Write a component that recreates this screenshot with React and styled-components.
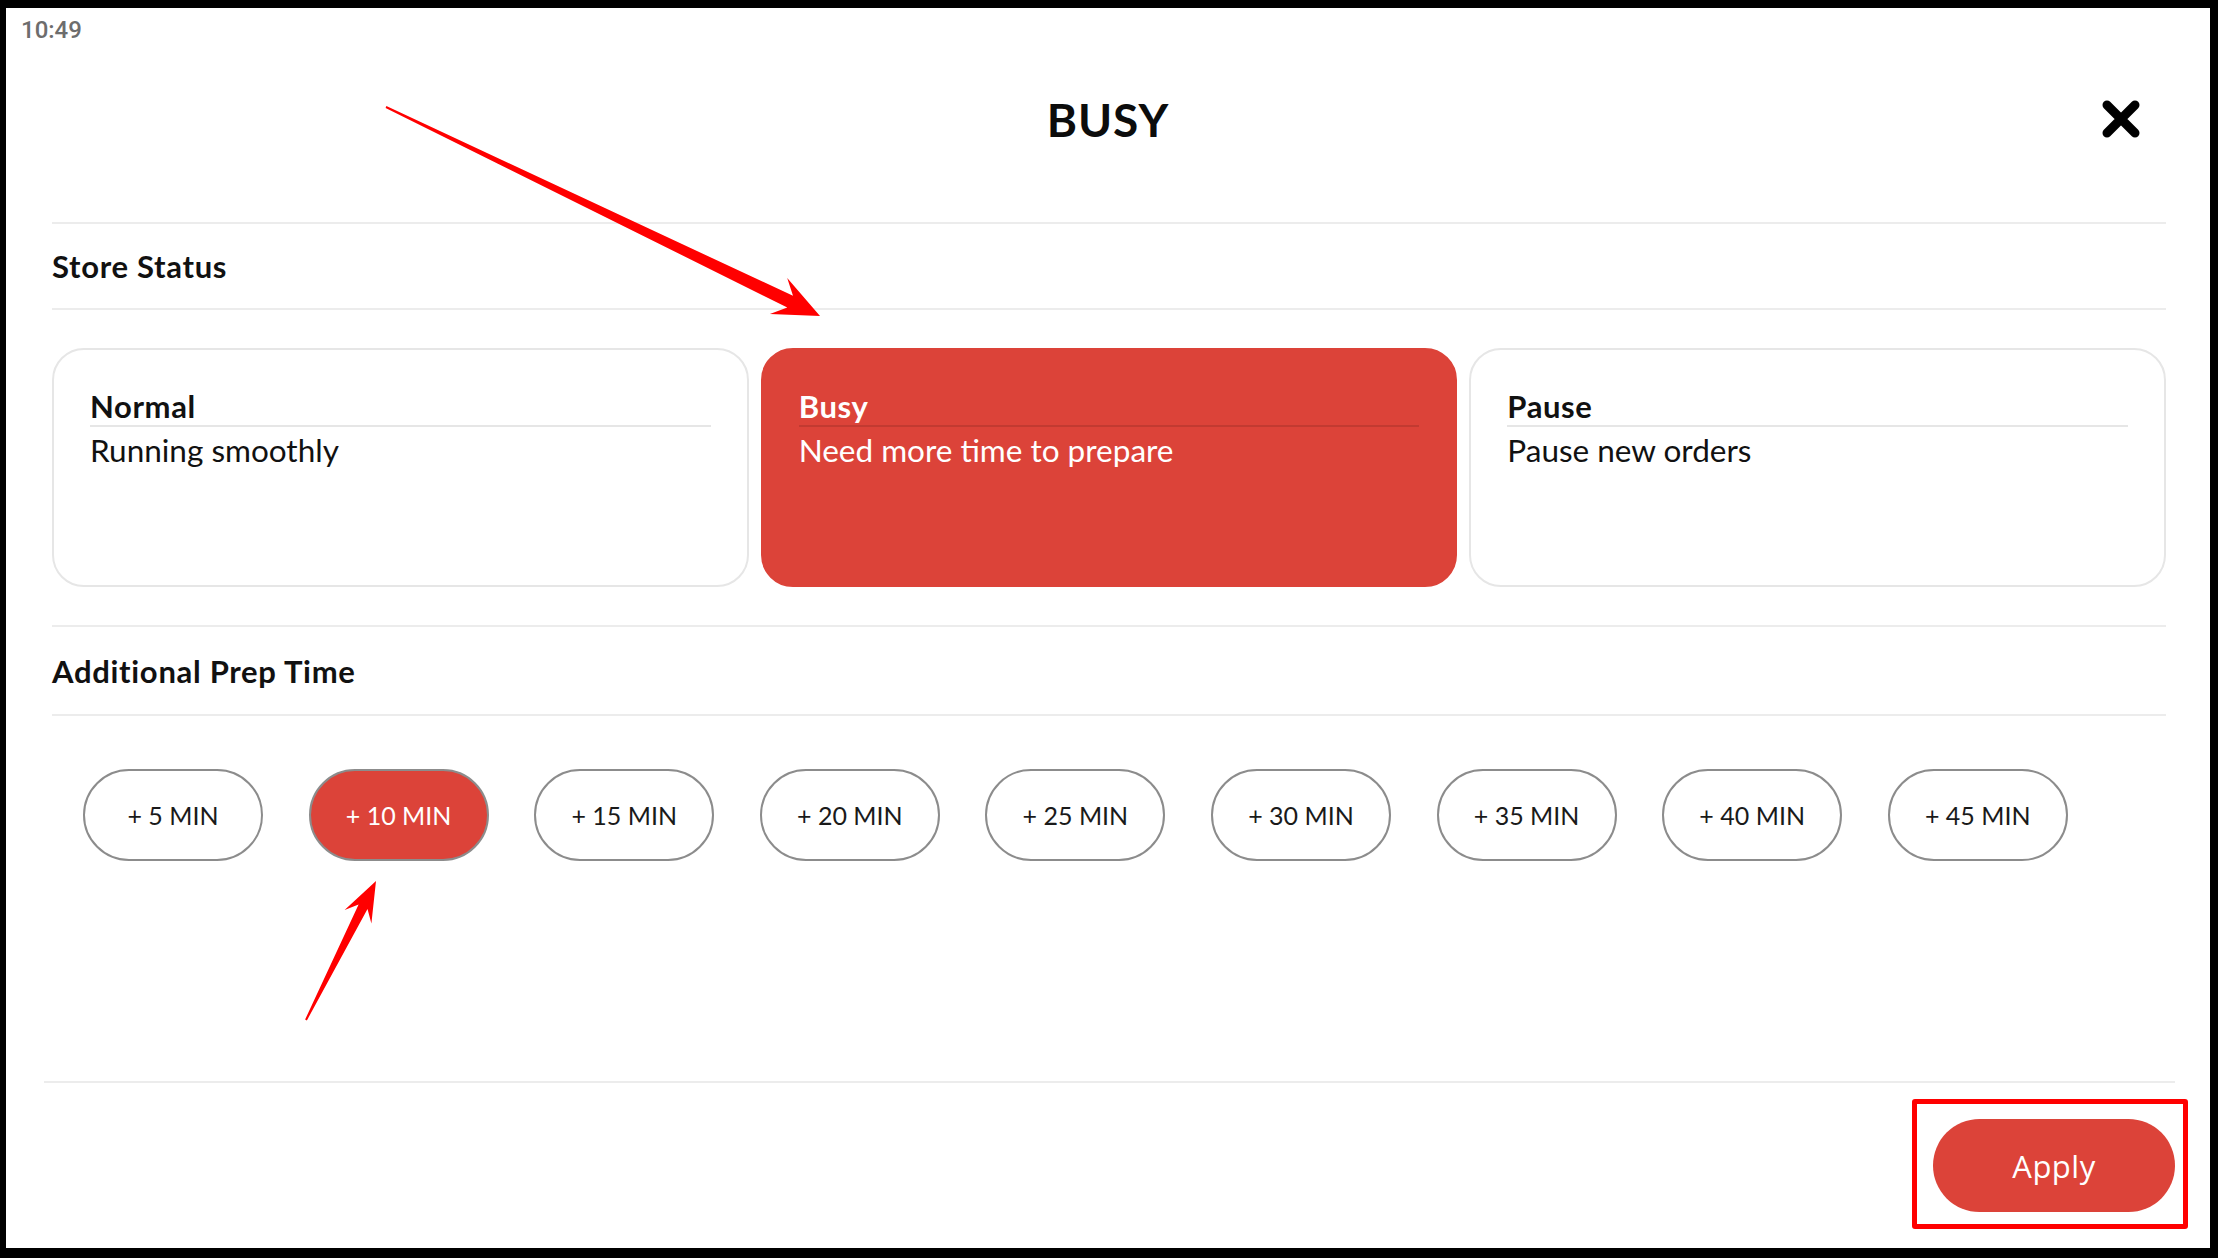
import React from 'react';
import styled, { createGlobalStyle } from 'styled-components';

const GlobalStyle = createGlobalStyle`
  html, body { margin: 0; padding: 0; background: #000; }
  body { width: 2218px; height: 1258px; overflow: hidden; }
  #root { width: 100%; height: 100%; }
  * { box-sizing: border-box; }
`;

const RED = '#dc4339';

const Screen = styled.div`
  width: 2218px;
  height: 1258px;
  padding: 8px 8px 10px 6px;
  background: #000;
`;

const Frame = styled.div`
  position: relative;
  height: 100%;
  background: #fff;
  display: flex;
  flex-direction: column;
  font-family: Lato, 'Open Sans', sans-serif;
  color: #111;
`;

const StatusBar = styled.div`
  height: 44px;
  padding-left: 15px;
  display: flex;
  align-items: center;
`;

const Clock = styled.span`
  font-family: Roboto, sans-serif;
  font-size: 24px;
  font-weight: 500;
  color: #6d6d6d;
`;

const Header = styled.div`
  height: 170px;
  padding-top: 40px;
  display: grid;
  grid-template-columns: 1fr auto 1fr;
  align-items: start;
`;

const Title = styled.h1`
  grid-column: 2;
  margin: 0;
  font-size: 46px;
  line-height: 56px;
  font-weight: 700;
  letter-spacing: 1px;
  color: #0c0c0c;
`;

const CloseButton = styled.button`
  grid-column: 3;
  justify-self: end;
  margin-right: 70px;
  height: 56px;
  padding: 0;
  border: none;
  background: none;
  display: flex;
  align-items: center;
  margin-top: -1px;
`;

const Content = styled.div`
  padding: 0 44px 0 46px;
  display: flex;
  flex-direction: column;
`;

const Divider = styled.div`
  height: 2px;
  background: #ececec;
`;

const SectionTitle = styled.div`
  height: ${p => p.$h || 84}px;
  display: flex;
  align-items: center;
  font-size: 31px;
  letter-spacing: 0.7px;
  font-weight: 700;
  color: #111;
`;

const Cards = styled.div`
  margin: 38px 0;
  height: 239px;
  display: grid;
  grid-template-columns: repeat(3, 1fr);
  gap: 12px;
`;

const Card = styled.div`
  border: 2px solid ${p => (p.$active ? RED : '#e6e6e6')};
  background: ${p => (p.$active ? RED : '#fff')};
  color: ${p => (p.$active ? '#fff' : '#111')};
  border-radius: 32px;
  padding: 38px 36px 0 36px;
`;

const CardTitle = styled.div`
  font-size: 31px;
  letter-spacing: 0.6px;
  line-height: 36px;
  font-weight: 700;
  padding-bottom: 1px;
  border-bottom: 2px solid ${p => (p.$active ? '#c23a31' : '#e6e6e6')};
`;

const CardText = styled.div`
  margin-top: 3px;
  font-size: 31.5px;
  line-height: 40px;
  font-weight: 400;
`;

const Chips = styled.div`
  margin-top: 53px;
  padding-left: 31px;
  display: flex;
  gap: 45.6px;
`;

const Chip = styled.button`
  width: 180px;
  height: 92px;
  border: 2px solid #8c8c8c;
  border-radius: 46px;
  background: ${p => (p.$active ? RED : '#fff')};
  color: ${p => (p.$active ? '#fff' : '#1a1a1a')};
  font-family: Lato, sans-serif;
  font-size: 25px;
  font-weight: 400;
  padding: 0;
`;

const Footer = styled.div`
  margin-top: auto;
  padding: 0 35px 36px 38px;
  display: flex;
  flex-direction: column;
`;

const ApplyRow = styled.div`
  margin-top: 36px;
  display: flex;
  justify-content: flex-end;
`;

const ApplyWrap = styled.div`
  position: relative;
`;

const ApplyButton = styled.button`
  width: 242px;
  height: 93px;
  border: none;
  border-radius: 47px;
  background: ${RED};
  color: #fff;
  font-family: 'Open Sans', sans-serif;
  font-size: 31px;
  font-weight: 400;
  letter-spacing: 0.5px;
`;

const Highlight = styled.div`
  position: absolute;
  top: -20px;
  right: -13px;
  bottom: -17px;
  left: -21px;
  border: 5px solid #ff0000;
  border-radius: 3px;
  pointer-events: none;
`;

const Overlay = styled.svg`
  position: absolute;
  top: 0;
  left: 0;
  width: 100%;
  height: 100%;
  pointer-events: none;
`;

function arrowPoints(x0, y0, x1, y1, { w0 = 1.5, w1 = 9, head = 38, hw = 15 } = {}) {
  const dx = x1 - x0;
  const dy = y1 - y0;
  const len = Math.hypot(dx, dy);
  const ux = dx / len;
  const uy = dy / len;
  const nx = -uy;
  const ny = ux;
  const neckX = x1 - ux * head * 0.72;
  const neckY = y1 - uy * head * 0.72;
  const baseX = x1 - ux * head;
  const baseY = y1 - uy * head;
  const pts = [
    [x0 + (nx * w0) / 2, y0 + (ny * w0) / 2],
    [neckX + (nx * w1) / 2, neckY + (ny * w1) / 2],
    [baseX + nx * hw, baseY + ny * hw],
    [x1, y1],
    [baseX - nx * hw, baseY - ny * hw],
    [neckX - (nx * w1) / 2, neckY - (ny * w1) / 2],
    [x0 - (nx * w0) / 2, y0 - (ny * w0) / 2],
  ];
  return pts.map(p => p.map(v => v.toFixed(1)).join(',')).join(' ');
}

const CloseIcon = () => (
  <svg width="38" height="38" viewBox="0 0 38 38">
    <path d="M5 5 L33 33 M33 5 L5 33" stroke="#000" strokeWidth="9" strokeLinecap="round" fill="none" />
  </svg>
);

const statuses = [
  { key: 'normal', title: 'Normal', text: 'Running smoothly' },
  { key: 'busy', title: 'Busy', text: 'Need more time to prepare' },
  { key: 'pause', title: 'Pause', text: 'Pause new orders' },
];

const times = [5, 10, 15, 20, 25, 30, 35, 40, 45];

export default function App() {
  const selectedStatus = 'busy';
  const selectedTime = 10;
  return (
    <>
      <GlobalStyle />
      <Screen>
        <Frame>
          <StatusBar>
            <Clock>10:49</Clock>
          </StatusBar>
          <Header>
            <Title>BUSY</Title>
            <CloseButton aria-label="Close">
              <CloseIcon />
            </CloseButton>
          </Header>
          <Content>
            <Divider />
            <SectionTitle>Store Status</SectionTitle>
            <Divider />
            <Cards>
              {statuses.map(s => (
                <Card key={s.key} $active={s.key === selectedStatus}>
                  <CardTitle $active={s.key === selectedStatus}>{s.title}</CardTitle>
                  <CardText>{s.text}</CardText>
                </Card>
              ))}
            </Cards>
            <Divider />
            <SectionTitle $h={87}>Additional Prep Time</SectionTitle>
            <Divider />
            <Chips>
              {times.map(t => (
                <Chip key={t} $active={t === selectedTime}>
                  + {t} MIN
                </Chip>
              ))}
            </Chips>
          </Content>
          <Footer>
            <Divider />
            <ApplyRow>
              <ApplyWrap>
                <ApplyButton>Apply</ApplyButton>
                <Highlight />
              </ApplyWrap>
            </ApplyRow>
          </Footer>
          <Overlay viewBox="0 0 2204 1240" preserveAspectRatio="none">
            <polygon
              points={arrowPoints(380, 99, 814, 308, { w0: 2, w1: 13, head: 46, hw: 20 })}
              fill="#ff0000"
            />
            <polygon
              points={arrowPoints(300, 1012, 370, 873, { w0: 2, w1: 10, head: 40, hw: 15 })}
              fill="#ff0000"
            />
          </Overlay>
        </Frame>
      </Screen>
    </>
  );
}
